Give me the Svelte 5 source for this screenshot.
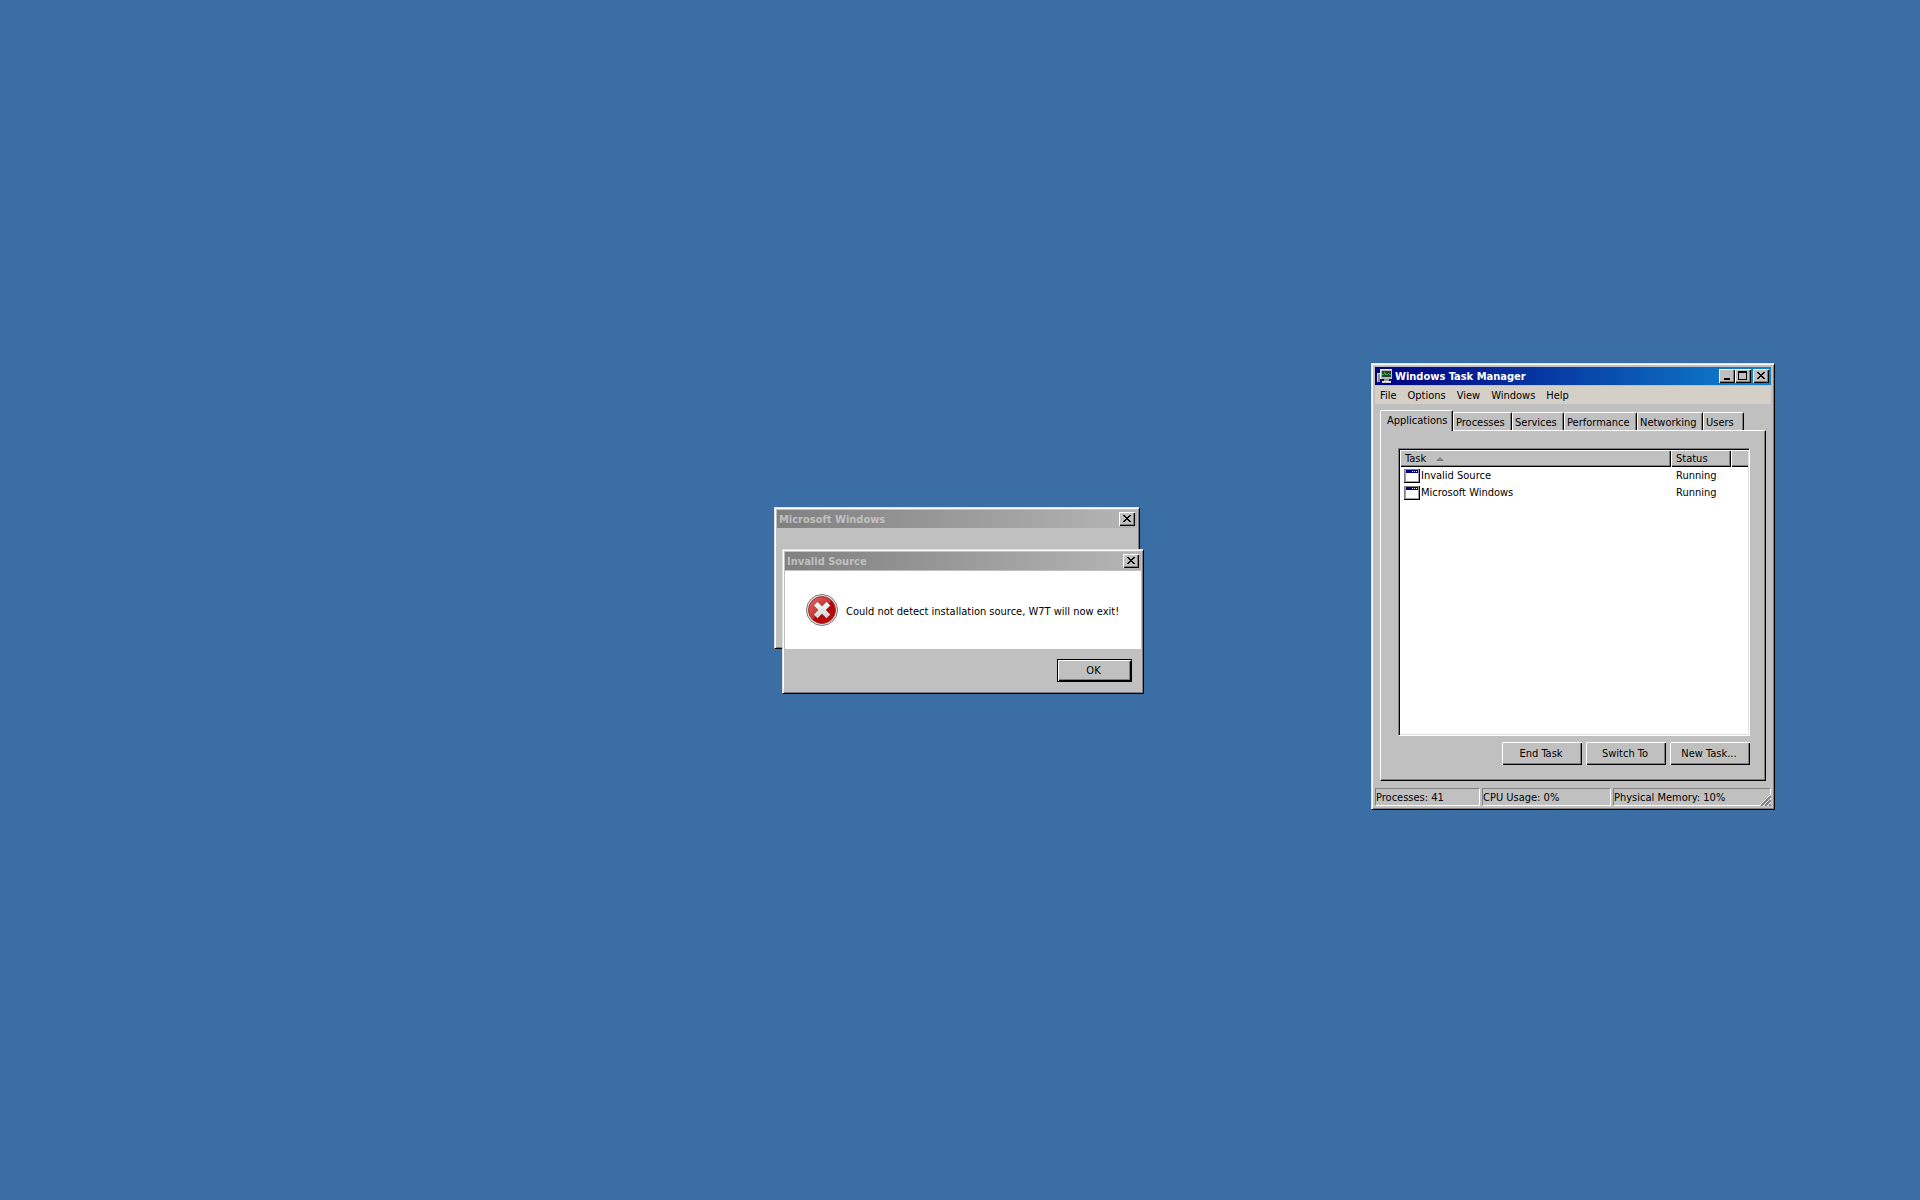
<script>
  const menus = ['File', 'Options', 'View', 'Windows', 'Help'];
  const tabs = ['Applications', 'Processes', 'Services', 'Performance', 'Networking', 'Users'];
  const tasks = [
    { name: 'Invalid Source', status: 'Running' },
    { name: 'Microsoft Windows', status: 'Running' }
  ];
  const actions = ['End Task', 'Switch To', 'New Task...'];
  const readings = ['Processes: 41', 'CPU Usage: 0%', 'Physical Memory: 10%'];
  let selected = $state('Applications');
</script>

{#snippet closeButton()}
  <button class="caption close" aria-label="Close">
    <svg width="8" height="7" viewBox="0 0 8 7" shape-rendering="crispEdges" aria-hidden="true">
      <path d="M0 0h2v1h1v1h2v-1h1v-1h2v1h-1v1h-1v1h-1v1h1v1h1v1h1v1h-2v-1h-1v-1h-2v1h-1v1h-2v-1h1v-1h1v-1h1v-1h-1v-1h-1v-1h-1z" />
    </svg>
  </button>
{/snippet}

<main class="desktop">
  <section class="window dialog parent" aria-label="Microsoft Windows">
    <header class="title inactive"><h2>Microsoft Windows</h2>{@render closeButton()}</header>
    <div class="blank"></div>
  </section>

  <section class="window dialog error" aria-label="Invalid Source">
    <header class="title inactive"><h2>Invalid Source</h2>{@render closeButton()}</header>
    <div class="message">
      <svg width="32" height="32" viewBox="0 0 32 32" aria-hidden="true">
        <defs>
          <linearGradient id="red" x1="0" y1="0" x2="1" y2="1">
            <stop offset="0" stop-color="#e07068" />
            <stop offset="0.5" stop-color="#c83030" />
            <stop offset="0.52" stop-color="#b00000" />
            <stop offset="1" stop-color="#c81010" />
          </linearGradient>
          <linearGradient id="cross" x1="0" y1="0" x2="0" y2="1">
            <stop offset="0" stop-color="#fff" />
            <stop offset="1" stop-color="#cfcfcf" />
          </linearGradient>
        </defs>
        <circle cx="16" cy="16" r="15.5" fill="#e8e8e8" stroke="#777" />
        <circle cx="16" cy="16" r="13.5" fill="url(#red)" stroke="#a03030" />
        <path d="M11.500 7.500 L16 12 L20.500 7.500 L24.500 11.500 L20 16 L24.500 20.500 L20.500 24.500 L16 20 L11.500 24.500 L7.500 20.500 L12 16 L7.500 11.500 Z" fill="url(#cross)" stroke="#8c1818" stroke-width=".5" stroke-linejoin="round" />
      </svg>
      <p>Could not detect installation source, W7T will now exit!</p>
    </div>
    <footer><button class="ok"><span>OK</span></button></footer>
  </section>

  <section class="window manager" aria-label="Windows Task Manager">
    <header class="title active">
      <svg class="app" width="16" height="16" viewBox="0 0 16 16" shape-rendering="crispEdges" aria-hidden="true">
        <path fill="#8c8c8c" d="M0 5h3v9h-3z" />
        <path fill="#d8d8d8" d="M0 5h1v9h-1zM0 5h3v1h-3z" />
        <path fill="#b8b8b8" d="M3 1h12v10h-12z" />
        <path fill="#eee" d="M3 1h12v1h-11v9h-1z" />
        <path fill="#284030" d="M5 3h9v6h-9z" />
        <path fill="#30b048" d="M5 6h2v1h-2zM7 4h1v2h-1zM8 5h1v2h-1zM9 6h2v1h-2zM11 5h1v1h-1zM12 6h2v1h-2z" />
        <path fill="#909090" d="M7 11h5v2h-5z" />
        <path fill="#c8c8c8" d="M5 13h9v2h-9z" />
        <path fill="#f0f0f0" d="M5 13h9v1h-9z" />
      </svg>
      <h2>Windows Task Manager</h2>
      <div class="group">
        <button class="caption" aria-label="Minimize">
          <svg width="8" height="8" viewBox="0 0 8 8" shape-rendering="crispEdges" aria-hidden="true"><path d="M1 6h6v2h-6z" /></svg>
        </button>
        <button class="caption" aria-label="Maximize">
          <svg width="9" height="9" viewBox="0 0 9 9" shape-rendering="crispEdges" aria-hidden="true"><path fill-rule="evenodd" d="M0 0h9v9h-9zM1 2v6h7v-6z" /></svg>
        </button>
      </div>
      {@render closeButton()}
    </header>

    <nav>
      {#each menus as menu}<button>{menu}</button>{/each}
    </nav>

    <div class="body">
      <div class="tabs" role="tablist">
        {#each tabs as tab}
          <button role="tab" aria-selected={selected === tab} onclick={() => (selected = tab)}>{tab}</button>
        {/each}
      </div>
      <div class="pane" role="tabpanel">
        <div class="list">
          <table>
            <colgroup><col /><col class="status-col" /><col class="rest-col" /></colgroup>
            <thead>
              <tr>
                <th scope="col">
                  <div class="sort">
                    <span>Task</span>
                    <svg width="8" height="4" viewBox="0 0 8 4" aria-hidden="true"><path fill="#808080" d="M0 4L4 0L8 4z" /></svg>
                  </div>
                </th>
                <th scope="col">Status</th>
                <th class="rest"></th>
              </tr>
            </thead>
            <tbody>
              {#each tasks as task}
                <tr>
                  <td>
                    <div class="task">
                      <svg width="16" height="14" viewBox="0 0 16 14" shape-rendering="crispEdges" aria-hidden="true">
                        <path fill="#808080" d="M0 0h16v14h-16z" />
                        <path fill="#000" d="M0 13h16v1h-16zM15 0h1v14h-1z" />
                        <path fill="#a0a0a0" d="M1 1h14v12h-14z" />
                        <path fill="#fff" d="M2 4h12v8h-12z" />
                        <path fill="#000080" d="M2 1h12v3h-12z" />
                        <path fill="#fff" d="M8 2h1v1h-1zM10 2h1v1h-1zM12 2h1v1h-1z" />
                      </svg>
                      <span>{task.name}</span>
                    </div>
                  </td>
                  <td>{task.status}</td>
                  <td></td>
                </tr>
              {/each}
            </tbody>
          </table>
        </div>
        <div class="actions">
          {#each actions as action}<button class="push">{action}</button>{/each}
        </div>
      </div>
    </div>

    <footer class="statusbar">
      {#each readings as reading}<span>{reading}</span>{/each}
      <svg class="grip" width="12" height="12" viewBox="0 0 12 12" aria-hidden="true">
        <path stroke="#fff" d="M0 12L12 0M4 12L12 4M8 12L12 8" />
        <path stroke="#808080" stroke-width="2" d="M2 12L12 2M6 12L12 6M10 12L12 10" />
      </svg>
    </footer>
  </section>
</main>

<style>
  :global(body) {
    background: #3a6ea5;
  }
  .desktop {
    position: relative;
    min-height: 100vh;
    overflow: hidden;
    font: 11px/13px 'DejaVu Sans Condensed', 'Noto Sans', sans-serif;
    color: #000;
  }
  .desktop * {
    box-sizing: border-box;
  }
  button {
    font: inherit;
    color: inherit;
    padding: 0;
    margin: 0;
    border: 0;
    border-radius: 0;
    background: #c0c0c0;
  }
  svg {
    display: block;
    flex: none;
  }
  .window {
    position: absolute;
    background: #c0c0c0;
    border: 1px solid;
    border-color: #dfdfdf #000 #000 #dfdfdf;
    box-shadow: inset 1px 1px #fff, inset -1px -1px #808080;
  }
  .dialog {
    padding: 2px;
  }
  .parent {
    left: 774px;
    top: 507px;
    width: 366px;
  }
  .blank {
    height: 118px;
  }
  .error {
    left: 782px;
    top: 549px;
    width: 362px;
  }
  .manager {
    left: 1371px;
    top: 363px;
    width: 404px;
    padding: 3px;
  }
  .title {
    display: flex;
    align-items: center;
    height: 18px;
    padding: 0 2px;
  }
  .title h2 {
    flex: 1;
    margin: 0;
    font-size: 11px;
    line-height: 13px;
    white-space: nowrap;
  }
  .inactive {
    background: linear-gradient(90deg, #808080, #b5b5b5);
    color: #c0c0c0;
  }
  .active {
    background: linear-gradient(90deg, #000080, #1084d0);
    color: #fff;
  }
  .app {
    margin-right: 2px;
  }
  .group {
    display: flex;
    margin-right: 2px;
  }
  .caption {
    display: grid;
    place-content: center;
    width: 16px;
    height: 14px;
    color: #000;
    padding: 0 1px 1px 0;
  }
  .caption,
  .push,
  .ok span {
    box-shadow: inset 1px 1px #fff, inset -1px -1px #000, inset -2px -2px #808080;
  }
  .message {
    display: flex;
    align-items: center;
    gap: 8px;
    height: 78px;
    margin-top: 1px;
    padding-left: 21px;
    background: #fff;
    white-space: nowrap;
  }
  .message p {
    margin: 0;
    padding-top: 2px;
  }
  .error footer {
    display: flex;
    justify-content: flex-end;
    padding: 10px 9px 9px;
  }
  .ok {
    width: 75px;
    height: 23px;
    padding: 1px;
    background: #000;
  }
  .ok span {
    display: grid;
    place-content: center;
    height: 100%;
    padding-right: 2px;
    background: #c0c0c0;
  }
  nav {
    display: flex;
    gap: 11px;
    height: 18px;
    margin-top: 1px;
    padding-left: 5px;
    background: #d4d0c8;
  }
  nav button {
    background: none;
  }
  .body {
    padding: 5px;
  }
  .tabs {
    display: grid;
    grid-template-columns: 73px 59px 52px 73px 66px 41px;
    align-items: end;
    height: 21px;
  }
  .tabs button {
    height: 18px;
    padding: 1px 0 0 2px;
    border: 1px solid #fff;
    border-width: 1px 1px 0 1px;
    border-right-color: #000;
    border-radius: 2px 2px 0 0;
    box-shadow: inset -1px 0 #808080;
    text-align: left;
    white-space: nowrap;
  }
  .tabs button[aria-selected='true'] {
    position: relative;
    height: 21px;
    margin-bottom: -1px;
    padding: 0 0 1px 6px;
  }
  .pane {
    padding: 17px 15px 15px 17px;
    border: 1px solid;
    border-color: #fff #000 #000 #fff;
    box-shadow: inset -1px -1px #808080;
  }
  .list {
    height: 288px;
    padding: 1px;
    background: #fff;
    border: 1px solid;
    border-color: #808080 #fff #fff #808080;
    box-shadow: inset 1px 1px #000, inset -1px -1px #dfdfdf;
  }
  table {
    width: 100%;
    table-layout: fixed;
    border-collapse: separate;
    border-spacing: 0;
  }
  .status-col {
    width: 60px;
  }
  .rest-col {
    width: 17px;
  }
  th {
    height: 17px;
    padding: 0 0 0 5px;
    background: #c0c0c0;
    box-shadow: inset 1px 1px #fff, inset -1px -1px #000, inset -2px -2px #808080;
    font-weight: normal;
    text-align: left;
  }
  .sort {
    display: flex;
    align-items: center;
    gap: 10px;
  }
  .rest {
    padding: 0;
    box-shadow: inset 1px 1px #fff, inset 0 -1px #000, inset 0 -2px #808080;
  }
  td {
    height: 17px;
    padding: 0 0 0 5px;
  }
  td:first-child {
    padding-left: 4px;
  }
  .task {
    display: flex;
    align-items: center;
    gap: 1px;
  }
  .actions {
    display: flex;
    justify-content: flex-end;
    gap: 4px;
    margin-top: 6px;
  }
  .push {
    width: 80px;
    height: 23px;
    padding-right: 2px;
  }
  .statusbar {
    position: relative;
    display: grid;
    grid-template-columns: 105px 129px 1fr;
    gap: 2px;
    margin-top: 2px;
  }
  .statusbar span {
    height: 18px;
    padding-top: 2px;
    border: 1px solid;
    border-color: #808080 #fff #fff #808080;
    white-space: nowrap;
  }
  .grip {
    position: absolute;
    right: 0;
    bottom: 0;
  }
</style>
